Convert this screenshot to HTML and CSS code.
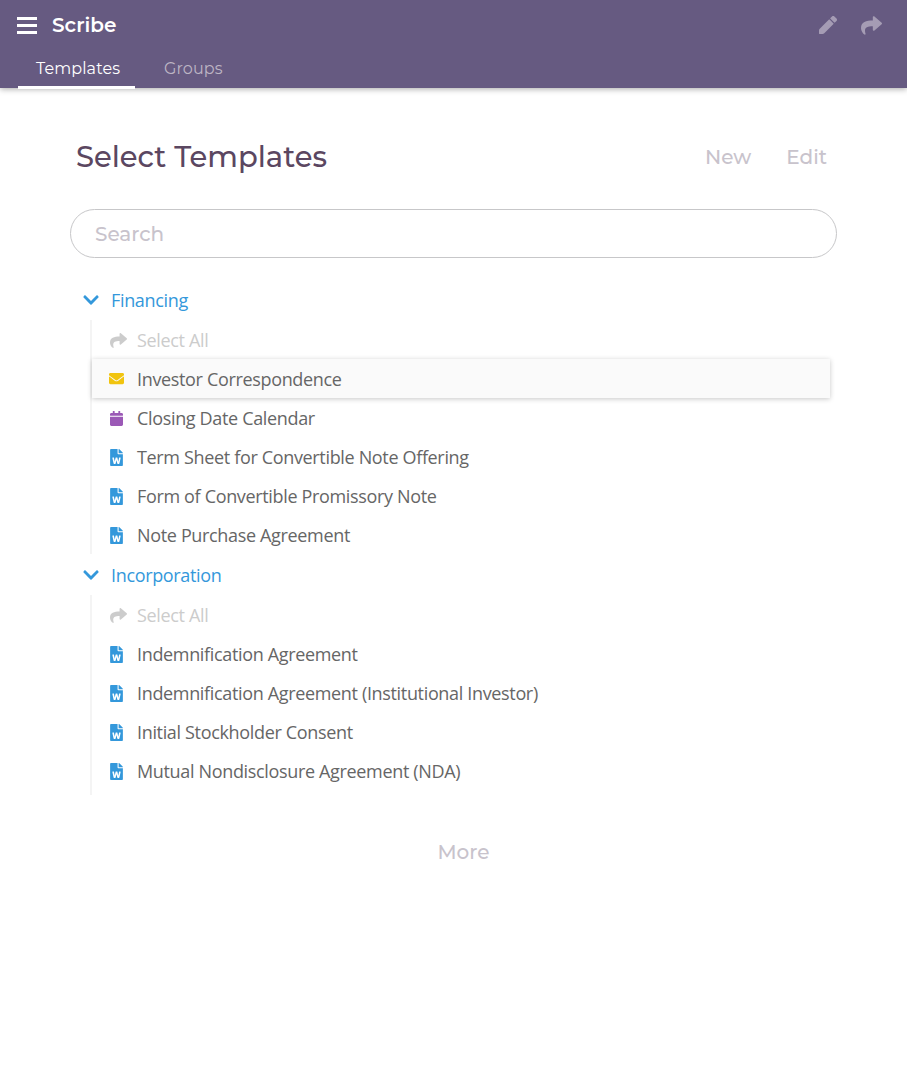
FILE: index.html
```html
<!DOCTYPE html>
<html lang="en">
<head>
<meta charset="utf-8">
<title>Scribe</title>
<link rel="stylesheet" href="styles.css">
</head>
<body>
<svg class="sprite" aria-hidden="true">
  <symbol id="share" viewBox="0 0 512 512"><path d="M503.691 189.836L327.687 37.851C312.281 24.546 288 35.347 288 56.015v80.053C127.371 137.907 0 170.1 0 322.326c0 61.441 39.581 122.309 83.333 154.132 13.653 9.931 33.111-2.533 28.077-18.631C66.066 312.814 132.917 274.316 288 272.085V360c0 20.7 24.3 31.453 39.687 18.164l176.004-152c11.071-9.562 11.086-26.753 0-36.328z"/></symbol>
  <symbol id="chevron" viewBox="0 0 448 512"><path d="M207.029 381.476L12.686 187.132c-9.373-9.373-9.373-24.569 0-33.941l22.667-22.667c9.357-9.357 24.522-9.375 33.901-.04L224 284.505l154.745-154.021c9.379-9.335 24.544-9.317 33.901.04l22.667 22.667c9.373 9.373 9.373 24.569 0 33.941L240.971 381.476c-9.373 9.372-24.569 9.372-33.942 0z"/></symbol>
  <symbol id="mail" viewBox="0 0 512 512"><path d="M502.3 190.8c3.9-3.1 9.7-.2 9.7 4.7V400c0 26.500-21.500 48-48 48H48c-26.500 0-48-21.500-48-48V195.600c0-5 5.700-7.800 9.700-4.700 22.400 17.400 52.100 39.500 154.100 113.600 21.100 15.400 56.700 47.800 92.200 47.600 35.700.3 72-32.800 92.300-47.600 102-74.100 131.600-96.300 154-113.700zM256 320c23.200.4 56.600-29.200 73.400-41.400 132.700-96.300 142.800-104.700 173.400-128.700 5.800-4.500 9.200-11.500 9.200-18.900v-19c0-26.500-21.500-48-48-48H48c-26.500 0-48 21.500-48 48v19c0 7.400 3.400 14.300 9.200 18.900 30.600 23.900 40.700 32.400 173.400 128.700 16.800 12.200 50.200 41.800 73.400 41.400z"/></symbol>
  <symbol id="calendar" viewBox="0 0 448 512"><path d="M12 192h424c6.600 0 12 5.400 12 12v260c0 26.500-21.500 48-48 48H48c-26.500 0-48-21.500-48-48V204c0-6.600 5.400-12 12-12zm436-44v-36c0-26.500-21.500-48-48-48h-48V12c0-6.600-5.400-12-12-12h-40c-6.600 0-12 5.400-12 12v52H160V12c0-6.600-5.400-12-12-12h-40c-6.600 0-12 5.400-12 12v52H48C21.500 64 0 85.500 0 112v36c0 6.600 5.400 12 12 12h424c6.600 0 12-5.400 12-12z"/></symbol>
  <symbol id="word" viewBox="0 0 384 512"><path d="M224 136V0H24C10.700 0 0 10.700 0 24v464c0 13.300 10.700 24 24 24h336c13.300 0 24-10.700 24-24V160H248c-13.200 0-24-10.800-24-24zm57.100 120H305c7.700 0 13.400 7.100 11.700 14.700l-38 168c-1.200 5.500-6.100 9.300-11.700 9.300h-38c-5.500 0-10.300-3.800-11.600-9.100-25.800-103.500-20.800-81.200-25.600-110.500h-.5c-1.100 14.300-2.400 17.400-25.600 110.500-1.300 5.300-6.100 9.100-11.600 9.100H117c-5.600 0-10.500-3.900-11.700-9.400l-37.800-168c-1.700-7.500 4-14.600 11.700-14.600h24.500c5.700 0 10.700 4 11.800 9.700 15.600 78 20.100 109.500 21 122.200 1.600-10.200 7.300-32.700 29.400-122.700 1.300-5.400 6.100-9.100 11.700-9.100h29.100c5.600 0 10.400 3.800 11.700 9.200 24 100.400 28.800 124 29.600 129.400-.2-11.200-2.600-17.800 21.600-129.200 1-5.600 5.900-9.500 11.500-9.500zM384 121.900v6.100H256V0h6.100c6.400 0 12.500 2.500 17 7l97.900 98c4.500 4.500 7 10.600 7 16.900z"/></symbol>
  <symbol id="pencil" viewBox="0 0 512 512"><path d="M497.900 142.100l-46.100 46.100c-4.700 4.700-12.300 4.700-17 0l-111-111c-4.700-4.700-4.700-12.300 0-17l46.100-46.100c18.700-18.700 49.100-18.700 67.900 0l60.100 60.100c18.800 18.700 18.800 49.100 0 67.900zM284.200 99.800L21.600 362.400Q0 384 0 410v78q0 24 24 24h78q26 0 47.600-21.700l262.600-262.600c4.700-4.700 4.700-12.300 0-17l-111-111c-4.800-4.700-12.400-4.700-17 .1z"/></symbol>
</svg>

<header class="topbar">
  <div class="topbar-row">
    <div class="menu"><i></i><i></i><i></i></div>
    <div class="brand">Scribe</div>
    <svg class="tool tool-edit"><use href="#pencil"/></svg>
    <svg class="tool"><use href="#share"/></svg>
  </div>
  <nav class="tabs">
    <div class="tab active">Templates</div>
    <div class="tab">Groups</div>
  </nav>
</header>

<main class="page">
  <div class="title-row">
    <h1>Select Templates</h1>
    <div class="actions"><span>New</span><span>Edit</span></div>
  </div>
  <input class="search" type="text" placeholder="Search">

  <section>
    <h2 class="group"><svg><use href="#chevron"/></svg>Financing</h2>
    <ul class="items">
      <li class="all"><svg class="wide"><use href="#share"/></svg><span>Select All</span></li>
      <li class="hover"><svg class="mail"><use href="#mail"/></svg><span>Investor Correspondence</span></li>
      <li><svg class="calendar"><use href="#calendar"/></svg><span>Closing Date Calendar</span></li>
      <li><svg><use href="#word"/></svg><span>Term Sheet for Convertible Note Offering</span></li>
      <li><svg><use href="#word"/></svg><span>Form of Convertible Promissory Note</span></li>
      <li><svg><use href="#word"/></svg><span>Note Purchase Agreement</span></li>
    </ul>
  </section>
  <section>
    <h2 class="group"><svg><use href="#chevron"/></svg>Incorporation</h2>
    <ul class="items last">
      <li class="all"><svg class="wide"><use href="#share"/></svg><span>Select All</span></li>
      <li><svg><use href="#word"/></svg><span>Indemnification Agreement</span></li>
      <li><svg><use href="#word"/></svg><span>Indemnification Agreement (Institutional Investor)</span></li>
      <li><svg><use href="#word"/></svg><span>Initial Stockholder Consent</span></li>
      <li><svg><use href="#word"/></svg><span>Mutual Nondisclosure Agreement (NDA)</span></li>
    </ul>
  </section>
  <div class="more">More</div>
</main>
</body>
</html>
```
FILE: styles.css
```css
* { box-sizing: border-box; }
body {
  margin: 0;
  background: #fff;
  font-family: Montserrat, Inter, sans-serif;
}
.sprite { display: none; }
svg { fill: currentColor; flex: none; }

.topbar {
  height: 88px;
  background: #665a81;
  color: #fff;
  box-shadow: 0 1px 6px rgba(0, 0, 0, .35);
}
.topbar-row {
  display: flex;
  align-items: center;
  height: 50px;
  padding: 0 25px 0 17px;
}
.menu { display: grid; gap: 4px; width: 20px; margin: 1px 15px 0 0; }
.menu i { height: 3px; background: #fff; }
.brand { flex: 1; font-size: 20px; font-weight: 600; }
.tool { width: 21px; height: 21px; color: #a59cb4; }
.tool-edit { width: 18px; height: 18px; margin-right: 24px; }
.tabs { display: flex; gap: 11px; height: 39px; padding-left: 18px; font-size: 16px; letter-spacing: .1px; }
.tab { height: 39px; padding: 0 18px; line-height: 37px; color: #bdb5c4; width: 117px; }
.tab.active { color: #fff; border-bottom: 3px solid #fff; }

.page { padding: 0 70px; }
.title-row {
  display: flex;
  justify-content: space-between;
  align-items: center;
  height: 121px;
  padding: 17px 10px 0 6px;
}
h1 { margin: 0 0 2px; color: #5b4761; font-size: 29px; font-weight: 500; }
.actions { display: flex; gap: 35px; color: #c8c3cc; font-size: 20px; font-weight: 500; }
.search {
  display: block;
  width: 767px;
  height: 49px;
  margin-bottom: 21px;
  padding: 0 24px;
  border: 1px solid #c7c7c9;
  border-radius: 25px;
  background: #fff;
  font: 500 20px Montserrat, Inter, sans-serif;
}
.search::placeholder { color: #c8c3cc; opacity: 1; }

.group, .items {
  font-family: "Open Sans", sans-serif;
  font-size: 18px;
  font-weight: 400;
  letter-spacing: -.34px;
}
.group {
  display: flex;
  align-items: center;
  height: 41px;
  margin: 0;
  padding-left: 13px;
  color: #3498db;
}
.group svg { width: 16px; height: 18px; margin-right: 12px; }
.items {
  margin: 0 7px 0 20px;
  padding: 0;
  border-left: 2px solid #f4f4f4;
  list-style: none;
  color: #666;
}
.items li { display: flex; align-items: center; height: 39px; padding-left: 18px; }
.items svg { width: 13px; height: 17px; margin: 1px 14px 0 0; color: #3498db; }
.items .all { color: #ccc; }
.items svg.wide { width: 17px; margin-right: 10px; color: #ccc; }
.items svg.mail { width: 15px; height: 15px; margin: 0 13px 0 -1px; color: #f1c40f; }
.items svg.calendar { height: 15px; color: #9b59b6; }
.items .hover { background: #fafafa; box-shadow: 0 1px 5px rgba(0, 0, 0, .22); }
.items.last { padding-bottom: 5px; }
.more {
  margin-top: 44px;
  padding-left: 20px;
  color: #c8c3cc;
  font-size: 20px;
  font-weight: 500;
  line-height: 26px;
  text-align: center;
}
```
